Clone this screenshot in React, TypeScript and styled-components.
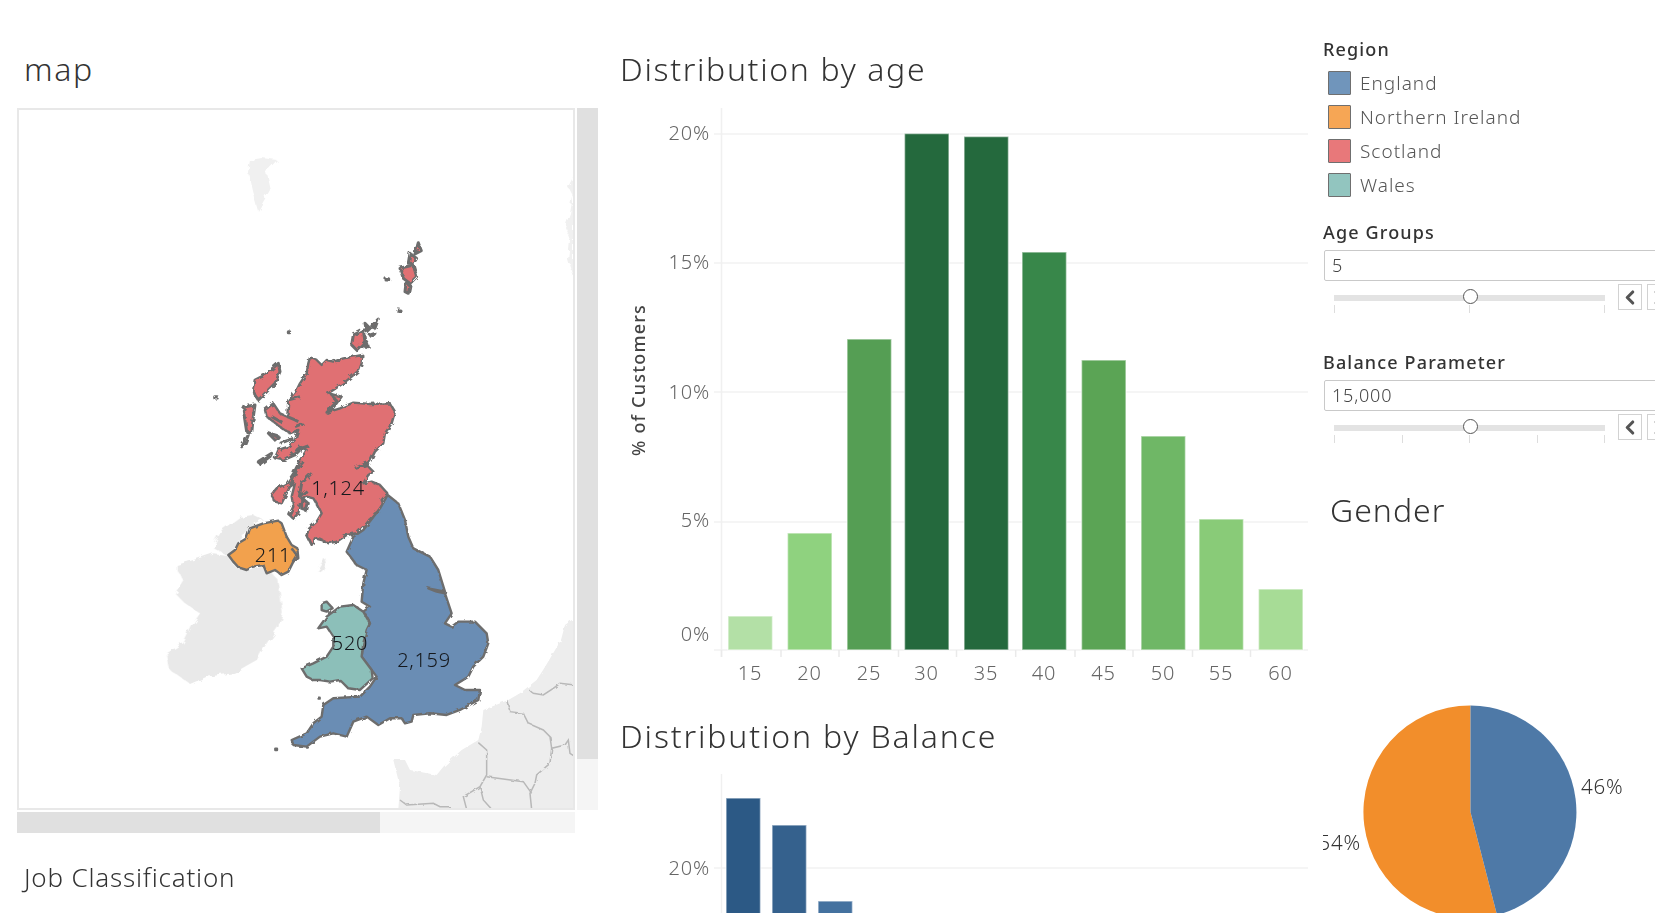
import React from 'react';
import styled, { createGlobalStyle } from 'styled-components';
import { ChevronLeft, ChevronRight } from 'lucide-react';

const GlobalStyle = createGlobalStyle`
  html, body {
    margin: 0;
    background: #fff;
    font-family: "Noto Sans", "Open Sans", sans-serif;
  }
`;

const Page = styled.div`
  display: grid;
  grid-template-columns: 620px 702px 333px;
  width: 1655px;
  height: 913px;
  overflow: hidden;
`;

const Title = styled.h2`
  margin: 0;
  font-size: 32px;
  line-height: 40px;
  font-weight: 300;
  letter-spacing: 1.65px;
  color: #333;
  white-space: nowrap;
`;

const LeftColumn = styled.section`
  padding: 49px 0 0 17px;
  ${Title} { padding-left: 7px; }
`;

const MapRow = styled.div`
  display: flex;
  gap: 2px;
  margin-top: 19px;
`;

const MapFrame = styled.div`
  width: 558px;
  height: 702px;
  box-sizing: border-box;
  border: 2px solid #e8e8e8;
  overflow: hidden;
  svg { display: block; }
`;

const VerticalBar = styled.div`
  display: flex;
  flex-direction: column;
  width: 21px;
  height: 702px;
  background: #f5f5f5;
`;

const VerticalThumb = styled.div`
  height: 651px;
  background: #e0e0e0;
`;

const HorizontalBar = styled.div`
  width: 558px;
  height: 21px;
  margin-top: 2px;
  background: #f5f5f5;
`;

const HorizontalThumb = styled.div`
  width: 363px;
  height: 100%;
  background: #e0e0e0;
`;

const SubTitle = styled(Title)`
  margin-top: 24px;
  font-size: 26px;
  letter-spacing: 0.8px;
`;

const MiddleColumn = styled.section`
  padding-top: 49px;
  svg { display: block; }
`;

const BalanceTitle = styled(Title)`
  margin-top: 18px;
  letter-spacing: 1.85px;
`;

const AgeChart = styled.svg`
  margin-top: 19px;
`;

const BalanceChart = styled.svg`
  margin-top: 18px;
`;

const RightColumn = styled.aside`
  padding: 38px 0 0 1px;
  overflow: hidden;
`;

const FieldLabel = styled.div`
  font-size: 18px;
  line-height: 22px;
  font-weight: 500;
  letter-spacing: 1.15px;
  color: #333;
`;

const Legend = styled.ul`
  list-style: none;
  margin: 6px 0 0;
  padding: 0 0 0 5px;
`;

const LegendRow = styled.li`
  display: flex;
  align-items: center;
  gap: 9px;
  height: 34px;
  font-size: 19px;
  letter-spacing: 1px;
  font-weight: 300;
  color: #555;
`;

const Swatch = styled.span<{ $color: string }>`
  width: 23px;
  height: 24px;
  box-sizing: border-box;
  border: 1.5px solid #6f6f6f;
  border-radius: 1px;
  background: ${(p) => p.$color};
`;

const Parameter = styled.div<{ $gap: number }>`
  margin-top: ${(p) => p.$gap}px;
`;

const ValueBox = styled.div`
  width: 420px;
  height: 31px;
  box-sizing: border-box;
  margin-top: 7px;
  margin-left: 1px;
  padding-left: 7px;
  border: 1.5px solid #c9c9c9;
  border-radius: 2px;
  font-size: 18px;
  line-height: 28px;
  font-weight: 300;
  letter-spacing: 0.8px;
  color: #444;
`;

const SliderRow = styled.div`
  display: flex;
  gap: 13px;
  width: 340px;
  margin-top: 3px;
  padding-left: 11px;
`;

const Slider = styled.div`
  position: relative;
  flex: none;
  width: 271px;
  padding-top: 11px;
`;

const Track = styled.div`
  height: 6px;
  background: #e3e3e3;
`;

const Thumb = styled.div`
  position: absolute;
  left: 129px;
  top: 5px;
  width: 15px;
  height: 15px;
  box-sizing: border-box;
  border: 1.5px solid #555;
  border-radius: 50%;
  background: #fff;
`;

const Ticks = styled.div`
  display: flex;
  justify-content: space-between;
  margin-top: 4px;
`;

const Tick = styled.span`
  width: 1px;
  height: 8px;
  background: #ddd;
`;

const StepButtons = styled.div`
  display: flex;
  flex: none;
  gap: 5px;
`;

const StepButton = styled.div`
  flex: none;
  display: flex;
  align-items: center;
  justify-content: center;
  width: 24px;
  height: 26px;
  box-sizing: border-box;
  border: 1.5px solid #d2d2d2;
  background: #fff;
  color: #555;
`;

const GenderTitle = styled(Title)`
  margin-top: 47px;
  padding-left: 7px;
  letter-spacing: 1px;
`;

const PieChart = styled.svg`
  display: block;
  margin-top: 170px;
`;

const BarLabel = styled.text`
  font-size: 20px;
  font-weight: 300;
  letter-spacing: 0.8px;
  fill: #666;
`;

const AxisTitle = styled.text`
  font-size: 18px;
  font-weight: 500;
  letter-spacing: 1.2px;
  fill: #444;
`;

const RegionCount = styled.text`
  font-size: 20px;
  font-weight: 300;
  letter-spacing: 0.7px;
  fill: #15181c;
  text-anchor: middle;
`;

const PieLabel = styled.text`
  font-size: 20.5px;
  font-weight: 300;
  letter-spacing: 0.8px;
  fill: #333;
`;

type Bar = { x: number; top: number; color: string };

const ageBars: Bar[] = [
  { x: 728, top: 616, color: '#b3e0a6' },
  { x: 787.5, top: 533, color: '#8fd27f' },
  { x: 847, top: 339, color: '#559e54' },
  { x: 904.5, top: 133.5, color: '#24693d' },
  { x: 964, top: 136.5, color: '#24693d' },
  { x: 1022, top: 252, color: '#38874a' },
  { x: 1081.5, top: 360, color: '#5ba455' },
  { x: 1141, top: 436, color: '#6fb766' },
  { x: 1199, top: 519, color: '#89cb78' },
  { x: 1258.5, top: 589, color: '#a7dc96' },
];

const ageLabels = [15, 20, 25, 30, 35, 40, 45, 50, 55, 60];
const ageTicks = [721.5, 781, 839, 898.5, 956.5, 1015.7, 1075, 1133, 1192.5, 1250.5];
const ageGrid = [
  { y: 134, text: '20%', labelY: 133 },
  { y: 263, text: '15%', labelY: 262 },
  { y: 392, text: '10%', labelY: 392 },
  { y: 522, text: '5%', labelY: 520 },
  { y: 650, text: '0%', labelY: 634 },
];

const balanceBars: Bar[] = [
  { x: 726, top: 798, color: '#2c5985' },
  { x: 772, top: 825, color: '#35618d' },
  { x: 818, top: 901, color: '#44719f' },
];

const regions = [
  { name: 'England', color: '#7095bb' },
  { name: 'Northern Ireland', color: '#f6a655' },
  { name: 'Scotland', color: '#e8787a' },
  { name: 'Wales', color: '#92c5bf' },
];

// outlines were traced off 3x crops, so each group has its own origin
const scotlandMain =
  'M330 412L350 420 365 435 380 420 400 425 430 415 460 410 487 405 485 430 478 450 455 470 430 490 400 510 385 520 425 530 410 550 395 570 380 578 420 565 460 548 510 552 570 550 585 575 575 610 555 640 550 670 525 695 510 725 470 745 500 735 520 755 505 765 490 790 515 785 540 795 562 820 545 840 555 865 525 880 500 910 470 940 440 945 410 965 385 970 365 960 345 955 335 975 320 945 328 925 350 905 365 880 355 860 340 835 320 830 300 850 295 880 280 895 268 885 280 860 275 830 285 790 270 800 245 850 225 845 213 825 230 805 260 790 280 760 300 720 320 690 300 680 280 700 250 720 225 715 235 690 265 680 285 660 295 630 270 640 240 620 200 590 195 570 220 550 240 580 262 590 265 540 290 510 300 490 320 460 325 430Z';
const scotlandLochs = [
  'M262 590L285 600 295 605',
  'M290 690L325 678',
  'M270 800L290 750 310 725',
  'M335 760L305 790 298 830 320 812',
  'M465 745L505 728',
  'M380 578L410 545 395 522',
  'M250 720L285 705 300 690',
  'M240 670L280 655',
  'M215 590L250 610',
  'M265 540L300 530',
  'M285 620L310 610',
];
const scotlandIsles = [
  'M235 430L240 455 225 490 195 520 175 540 160 515 165 480 195 465Z',
  'M135 560L165 555 160 590 155 640 140 635 130 570Z',
  'M125 680L145 645 135 670Z',
  'M175 725L215 700 210 710 180 732Z',
  'M205 640L235 650 225 660Z',
  'M305 835L325 850 320 870 305 865Z',
  // orkney
  'M460 345L490 330 495 365 470 390 455 375Z',
  'M495 310L510 325 500 335Z',
  'M515 318L535 297 525 325Z',
  'M510 345L525 340 515 350Z',
  'M490 378L500 365 505 380Z',
  // shetland
  'M655 68L664 92 645 102Z',
  'M630 100L650 115 640 130 625 130Z',
  'M600 145L640 135 650 170 630 190 610 175Z',
  'M618 190L630 195 625 220 615 215Z',
  'M558 176h8v4h-8Z',
  'M594 270h6v4h-6Z',
  'M265 335h4v3h-4Z',
  'M44 530h8v4h-8Z',
];
const england =
  'M713 45L745 70 765 120 775 170 790 205 840 230 865 270 885 335 835 325 860 335 885 340 905 400 885 430 905 440 925 425 975 425 1010 460 1015 490 1000 530 970 560 955 590 915 615 945 630 990 630 985 660 930 690 890 705 840 700 790 705 785 725 765 730 755 715 720 715 685 735 650 710 610 725 590 770 550 760 510 770 470 800 430 795 425 780 470 760 490 730 515 710 520 675 550 655 630 650 660 620 680 590 665 570 635 530 640 490 650 450 660 430 640 395 660 380 635 365 640 310 650 270 620 255 590 215 610 170 640 150 690 85Z';
const wales =
  'M505 445L530 410 570 380 610 375 640 395 660 430 650 450 640 490 635 530 665 570 668 595 630 630 595 625 570 600 540 605 510 600 490 600 470 590 455 565 490 550 530 530 550 500 550 470 530 440Z';
const anglesey = 'M515 370L530 365 548 385 530 395 515 390Z';
const northernIreland =
  'M235 225L255 210 265 190 290 175 300 145 340 130 385 122 395 130 410 170 425 195 442 205 445 235 430 245 415 275 395 285 375 270 350 280 340 255 310 260 290 270 265 262 250 245Z';
const ireland =
  'M80 255L130 240 190 220 230 225 260 265 300 272 345 255 375 290 385 300 398 400 385 440 350 490 320 540 250 580 170 590 120 612 60 570 50 520 100 490 130 430 150 400 100 365 75 340 100 300 80 270Z';
const donegal = 'M190 200L215 150 270 110 310 105 340 120 290 150 260 200 230 225 190 205Z';
const isleOfMan = 'M500 270L525 235 530 250 515 275Z';
const france =
  'M600 -138L555 -105 543 -60 495 21 470 60 420 100 385 120 310 150 305 200 295 240 245 270 190 320 170 345 90 330 75 300 40 300 60 380 55 448 600 448Z';
const borders = [
  'M448 90L460 100 490 105 520 85 540 70 585 75',
  'M380 120L390 155 430 160 445 190 490 210 510 230 515 265 555 255 565 240 570 280 585 290',
  'M515 265L510 310 470 345 465 370 450 400 455 448',
  'M295 248L320 270 320 345 300 380 250 410 260 448',
  'M320 350L430 365 455 400',
  'M300 380L310 420 335 448',
  'M60 420L80 435 160 430 180 440 210 440',
];

const Shape = ({ d, fill, width = 2.4 }: { d: string; fill: string; width?: number }) => (
  <path d={d} fill={fill} stroke="#6d6d6d" strokeWidth={width} strokeLinejoin="round" vectorEffect="non-scaling-stroke" />
);

const Coast = ({ id, frequency, scale, seed, blur }: { id: string; frequency: number; scale: number; seed: number; blur: number }) => (
  <filter id={id} x="-5%" y="-5%" width="110%" height="110%">
    <feTurbulence type="fractalNoise" baseFrequency={frequency} numOctaves={2} seed={seed} result="noise" />
    <feDisplacementMap in="SourceGraphic" in2="noise" scale={scale} result="moved" />
    <feGaussianBlur in="moved" stdDeviation={blur} />
  </filter>
);

const UkMap = () => (
  <svg width={554} height={698} viewBox="19 110 554 698">
    <defs>
      <Coast id="rough-coast" frequency={0.22} scale={4.5} seed={4} blur={0.4} />
      <Coast id="soft-coast" frequency={0.18} scale={3} seed={9} blur={0.4} />
      <Coast id="grey-coast" frequency={0.12} scale={7} seed={2} blur={0.7} />
    </defs>
    <g filter="url(#grey-coast)">
      <g fill="#f0f0f0">
        <path d="M250 160L262 158 277 160 266 172 270 190 258 211 252 190 248 172Z" />
        <path d="M573 177L568 187 573 197 570 213 565 227 570 240 568 260 573 277Z" />
      </g>
      <g transform="translate(150 480) scale(0.3333)" fill="#e9e9e9">
        <path d={ireland} />
        <path d={donegal} />
        <path d={isleOfMan} />
      </g>
    </g>
    <g filter="url(#soft-coast)">
      <g transform="translate(380 660) scale(0.3333)">
        <path d={france} fill="#ededed" />
        {borders.map((d) => (
          <path key={d} d={d} fill="none" stroke="#b8b8b8" strokeWidth={1.5} vectorEffect="non-scaling-stroke" />
        ))}
      </g>
    </g>
    <g filter="url(#rough-coast)">
      <g transform="translate(200 220) scale(0.3333)">
        <Shape d={scotlandMain} fill="#e07073" />
        {scotlandLochs.map((d) => (
          <Shape key={d} d={d} fill="none" width={3} />
        ))}
        {scotlandIsles.map((d) => (
          <Shape key={d} d={d} fill="#e07073" width={3} />
        ))}
      </g>
    </g>
    <g filter="url(#soft-coast)">
      <g transform="translate(150 480) scale(0.3333)">
        <Shape d={england} fill="#6b8db4" />
        <Shape d={wales} fill="#8cbfb9" />
        <Shape d={anglesey} fill="#8cbfb9" />
        <Shape d={northernIreland} fill="#f2a14d" />
        <Shape d="M425 205L440 225 428 245" fill="none" />
        <Shape d="M376 806h5v4h-5Z" fill="#6b8db4" />
        <Shape d="M506 653h3v3h-3Z" fill="#6b8db4" />
      </g>
    </g>
    <RegionCount x={338} y={495}>1,124</RegionCount>
    <RegionCount x={273} y={562}>211</RegionCount>
    <RegionCount x={350} y={650}>520</RegionCount>
    <RegionCount x={424} y={667}>2,159</RegionCount>
  </svg>
);

const GridLine = ({ y }: { y: number }) => <line x1={714} x2={1308} y1={y} y2={y} stroke="#f2f2f2" strokeWidth={1.5} />;

const Column = ({ bar, width, bottom }: { bar: Bar; width: number; bottom: number }) => (
  <rect
    x={bar.x}
    y={bar.top}
    width={width}
    height={bottom - bar.top}
    fill={bar.color}
    stroke="#fff"
    strokeOpacity={0.55}
    strokeWidth={1.5}
  />
);

const DistributionByAge = () => (
  <AgeChart width={702} height={590} viewBox="620 108 702 590">
    {ageGrid.map((g) => (
      <g key={g.text}>
        <GridLine y={g.y} />
        <BarLabel x={710} y={g.labelY + 7} textAnchor="end">{g.text}</BarLabel>
      </g>
    ))}
    <line x1={721.5} x2={721.5} y1={108} y2={657} stroke="#f0f0f0" strokeWidth={1.5} />
    {ageTicks.map((x) => (
      <line key={x} x1={x} x2={x} y1={650} y2={657} stroke="#eaeaea" strokeWidth={1.5} />
    ))}
    {ageBars.map((b) => (
      <Column key={b.x} bar={b} width={44.5} bottom={650} />
    ))}
    {ageBars.map((b, i) => (
      <BarLabel key={b.x} x={b.x + 22} y={680} textAnchor="middle">{ageLabels[i]}</BarLabel>
    ))}
    <AxisTitle transform="translate(645 380) rotate(-90)" textAnchor="middle">% of Customers</AxisTitle>
  </AgeChart>
);

const DistributionByBalance = () => (
  <BalanceChart width={702} height={139} viewBox="620 774 702 139">
    <GridLine y={868} />
    <BarLabel x={710} y={875} textAnchor="end">20%</BarLabel>
    <line x1={721.5} x2={721.5} y1={774} y2={913} stroke="#f0f0f0" strokeWidth={1.5} />
    {balanceBars.map((b) => (
      <Column key={b.x} bar={b} width={34.5} bottom={930} />
    ))}
  </BalanceChart>
);

const Control = ({ label, value, ticks, gap }: { label: string; value: string; ticks: number; gap: number }) => (
  <Parameter $gap={gap}>
    <FieldLabel>{label}</FieldLabel>
    <ValueBox>{value}</ValueBox>
    <SliderRow>
      <Slider>
        <Track />
        <Thumb />
        <Ticks>
          {Array.from({ length: ticks }, (_, i) => (
            <Tick key={i} />
          ))}
        </Ticks>
      </Slider>
      <StepButtons>
        <StepButton><ChevronLeft size={23} strokeWidth={3.4} /></StepButton>
        <StepButton><ChevronRight size={23} strokeWidth={3.4} /></StepButton>
      </StepButtons>
    </SliderRow>
  </Parameter>
);

const GenderPie = () => (
  <PieChart width={332} height={213} viewBox="1323 700 332 213">
    <path d="M1470.5 812V705.5A106.5 106.5 0 1 0 1497 915Z" fill="#f28e2b" />
    <path d="M1470.5 812V705.5A106.5 106.5 0 0 1 1497 915Z" fill="#4e79a7" />
    <PieLabel x={1581} y={794}>46%</PieLabel>
    <PieLabel x={1361} y={850} textAnchor="end">54%</PieLabel>
  </PieChart>
);

export default function App() {
  return (
    <Page>
      <GlobalStyle />
      <LeftColumn>
        <Title>map</Title>
        <MapRow>
          <MapFrame>
            <UkMap />
          </MapFrame>
          <VerticalBar>
            <VerticalThumb />
          </VerticalBar>
        </MapRow>
        <HorizontalBar>
          <HorizontalThumb />
        </HorizontalBar>
        <SubTitle>Job Classification</SubTitle>
      </LeftColumn>
      <MiddleColumn>
        <Title>Distribution by age</Title>
        <DistributionByAge />
        <BalanceTitle>Distribution by Balance</BalanceTitle>
        <DistributionByBalance />
      </MiddleColumn>
      <RightColumn>
        <FieldLabel>Region</FieldLabel>
        <Legend>
          {regions.map((r) => (
            <LegendRow key={r.name}>
              <Swatch $color={r.color} />
              {r.name}
            </LegendRow>
          ))}
        </Legend>
        <Control label="Age Groups" value="5" ticks={3} gap={19} />
        <Control label="Balance Parameter" value="15,000" ticks={5} gap={38} />
        <GenderTitle>Gender</GenderTitle>
        <GenderPie />
      </RightColumn>
    </Page>
  );
}
